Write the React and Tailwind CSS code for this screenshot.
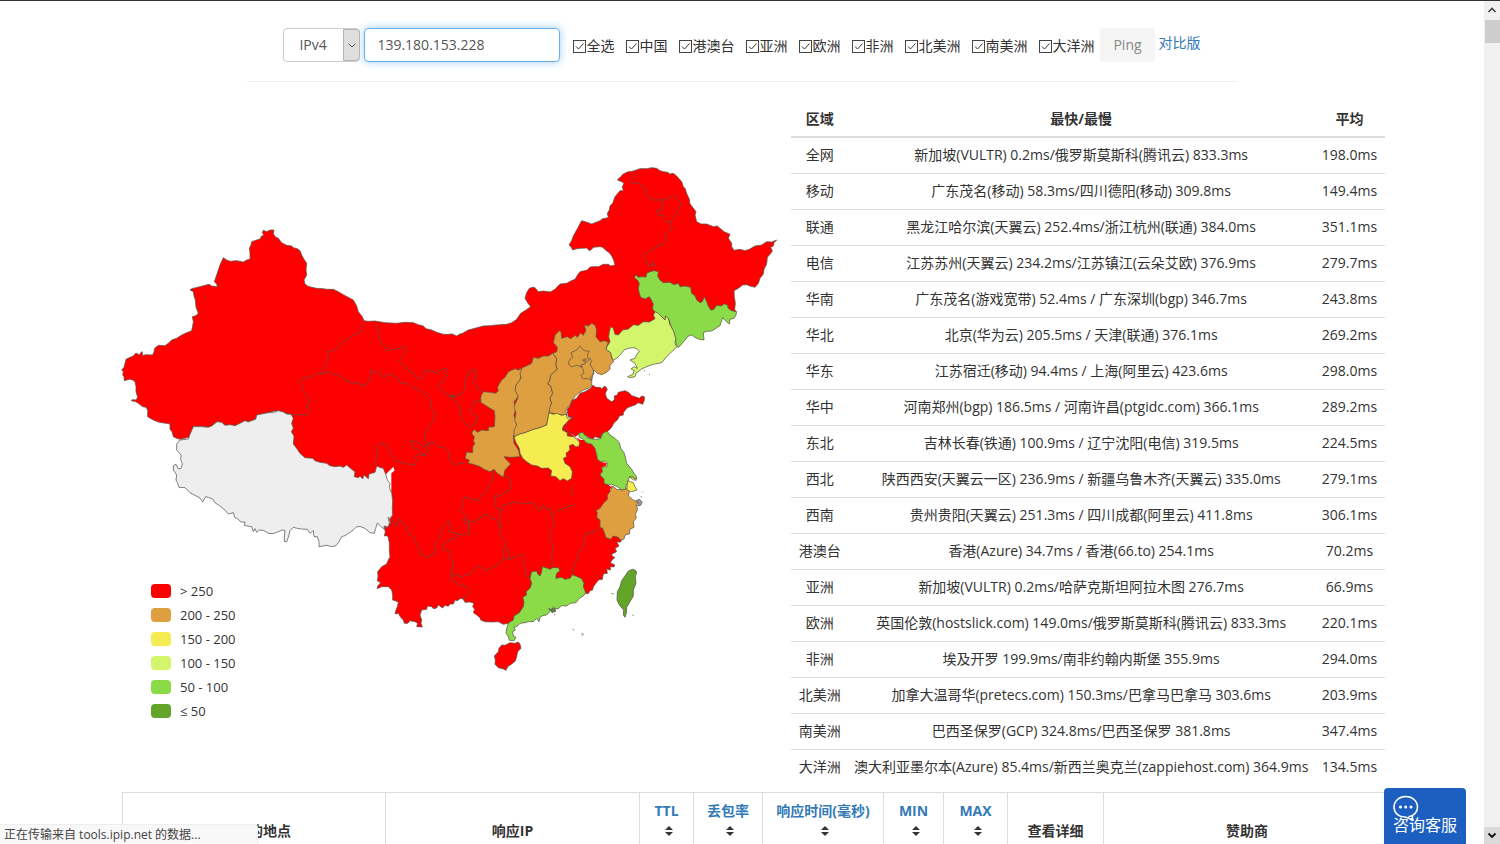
import React, { useState } from "react";

const AREAS = ["全选", "中国", "港澳台", "亚洲", "欧洲", "非洲", "北美洲", "南美洲", "大洋洲"];

const ROWS = [
  ["全网", "新加坡(VULTR) 0.2ms/俄罗斯莫斯科(腾讯云) 833.3ms", "198.0ms"],
  ["移动", "广东茂名(移动) 58.3ms/四川德阳(移动) 309.8ms", "149.4ms"],
  ["联通", "黑龙江哈尔滨(天翼云) 252.4ms/浙江杭州(联通) 384.0ms", "351.1ms"],
  ["电信", "江苏苏州(天翼云) 234.2ms/江苏镇江(云朵艾欧) 376.9ms", "279.7ms"],
  ["华南", "广东茂名(游戏宽带) 52.4ms / 广东深圳(bgp) 346.7ms", "243.8ms"],
  ["华北", "北京(华为云) 205.5ms / 天津(联通) 376.1ms", "269.2ms"],
  ["华东", "江苏宿迁(移动) 94.4ms / 上海(阿里云) 423.6ms", "298.0ms"],
  ["华中", "河南郑州(bgp) 186.5ms / 河南许昌(ptgidc.com) 366.1ms", "289.2ms"],
  ["东北", "吉林长春(铁通) 100.9ms / 辽宁沈阳(电信) 319.5ms", "224.5ms"],
  ["西北", "陕西西安(天翼云一区) 236.9ms / 新疆乌鲁木齐(天翼云) 335.0ms", "279.1ms"],
  ["西南", "贵州贵阳(天翼云) 251.3ms / 四川成都(阿里云) 411.8ms", "306.1ms"],
  ["港澳台", "香港(Azure) 34.7ms / 香港(66.to) 254.1ms", "70.2ms"],
  ["亚洲", "新加坡(VULTR) 0.2ms/哈萨克斯坦阿拉木图 276.7ms", "66.9ms"],
  ["欧洲", "英国伦敦(hostslick.com) 149.0ms/俄罗斯莫斯科(腾讯云) 833.3ms", "220.1ms"],
  ["非洲", "埃及开罗 199.9ms/南非约翰内斯堡 355.9ms", "294.0ms"],
  ["北美洲", "加拿大温哥华(pretecs.com) 150.3ms/巴拿马巴拿马 303.6ms", "203.9ms"],
  ["南美洲", "巴西圣保罗(GCP) 324.8ms/巴西圣保罗 381.8ms", "347.4ms"],
  ["大洋洲", "澳大利亚墨尔本(Azure) 85.4ms/新西兰奥克兰(zappiehost.com) 364.9ms", "134.5ms"],
];

const LEGEND = [
  ["> 250", "bg-[#ff0000]"],
  ["200 - 250", "bg-[#de9f40]"],
  ["150 - 200", "bg-[#f4ec51]"],
  ["100 - 150", "bg-[#d2f56b]"],
  ["50 - 100", "bg-[#8bda48]"],
  ["≤ 50", "bg-[#62a529]"],
];

const RED = "#ff0000";
const ORANGE = "#de9f40";
const YELLOW = "#f4ec51";
const LIME = "#d2f56b";
const GREEN = "#8bda48";
const DARK = "#62a529";

// coast is stroked, inner only closes the fill
function Land({ coast, inner }) {
  return (
    <>
      <path d={`M${coast} ${inner}Z`} fill={RED} stroke="none" />
      <path d={`M${coast}`} fill="none" />
    </>
  );
}

function ChinaMap() {
  return (
    <svg
      viewBox="33 0 2010 1590"
      className="block w-full"
      stroke="#5b5347"
      strokeWidth="2.2"
      strokeLinejoin="round"
      role="img"
      aria-label="中国"
    >
      {/* interior fill */}
      <g transform="translate(540 450)" stroke="none" fill={RED}>
        <path d="M222,65 480,112 600,100 720,120 800,250 830,380 960,560 960,700 885,850 350,850 330,560 310,500 250,560 0,480 -20,350 -10,200 100,100Z" />
      </g>

      {/* Inner Mongolia, Heilongjiang */}
      <g transform="translate(1170 0)">
        <Land
          coast="-408,512 -395,514 -375,513 -345,518 -310,520 -285,517 -260,518 -245,524 -230,528 -222,536 -205,540 -190,547 -170,553 -155,553 -143,552 -130,558 -120,552 -112,550 -95,540 -72,534 -50,528 -30,527 -12,525 20,523 35,518 50,508 62,490 78,480 92,470 84,460 75,445 80,428 88,415 98,412 105,413 115,425 130,423 150,426 165,418 180,402 200,400 212,393 225,388 232,376 240,365 262,360 270,351 280,350 295,350 310,343 325,343 332,348 345,345 341,330 335,318 328,308 320,303 308,292 300,290 280,292 275,298 268,302 260,294 240,295 230,296 218,300 213,290 207,285 215,272 220,258 230,240 238,225 245,212 258,216 275,222 285,218 300,212 308,206 325,203 322,190 328,180 330,168 338,160 345,140 355,128 360,122 370,122 367,110 372,100 365,95 352,90 362,80 370,72 382,66 400,63 420,56 440,56 455,53 470,55 480,62 490,65 503,67 510,72 520,70 530,78 545,95 550,110 555,115 560,130 568,148 570,162 578,172 588,185 585,195 590,215 603,222 620,222 640,230 652,228 660,235 672,245 690,253 685,265 695,280 695,290 702,301 720,298 735,302 748,298 765,288 785,285 800,275 815,276 830,270 822,278 820,288 812,292 817,303 810,313 802,322 800,342 792,358 790,372 780,385 775,400 765,412 750,408 740,404 728,405 715,415 702,422 703,440 706,460 704,478 708,485"
          inner="640,500 470,530 350,570 325,610 160,660 -100,900 -408,800"
        />
        <path
          fill="none"
          d="M405,65 402,82 388,95 400,102 418,98 425,108 436,112 438,130 445,142 460,150 490,150 505,145 520,135 530,145 545,160 538,172 530,190 520,205 512,218 518,235 508,240 495,255 498,268 490,282 470,290 455,300 430,315 436,330 445,345 450,362M487,150 486,180 473,180 470,190 480,197 488,195 492,210 500,218 514,213M452,345 458,335 466,346Z"
        />
      </g>

      {/* Xinjiang */}
      <path
        transform="translate(0 210)"
        fill={RED}
        d="M210,658 200,655 190,650 186,635 180,628 180,612 168,610 155,608 145,606 130,600 113,590 113,570 108,562 98,560 85,550 75,544 65,543 66,539 78,540 83,532 78,515 78,500 75,485 68,480 58,478 50,480 43,482 42,470 38,465 40,455 35,450 42,442 45,430 48,418 60,412 70,408 78,399 88,405 92,398 97,395 98,407 107,404 128,405 132,395 134,385 145,376 165,377 175,370 185,360 200,355 215,345 230,338 245,332 248,318 250,305 247,290 257,287 265,280 258,262 256,240 252,228 250,215 240,210 245,206 270,200 285,196 297,193 305,198 322,200 320,192 313,185 320,165 325,150 330,135 340,113 350,120 360,124 380,122 400,126 410,120 420,117 420,100 418,85 423,75 425,65 440,60 450,57 455,48 462,46 457,38 460,31 470,35 480,30 492,30 490,40 495,50 505,55 515,68 530,76 545,78 550,83 562,86 570,92 575,105 582,118 590,130 588,150 590,165 582,180 584,190 592,198 605,202 620,205 640,206 650,208 670,208 685,215 700,224 730,240 740,258 745,275 757,290 762,302 755,320 755,335 740,342 725,348 705,362 685,380 670,392 652,396 655,410 645,435 635,460 618,462 600,472 580,475 565,485 575,495 578,510 590,525 595,540 602,548 590,555 597,575 590,588 570,583 545,585 525,578 505,572 490,574 475,578 455,582 440,586 437,597 425,602 415,605 405,602 390,610 375,617 360,616 345,616 335,608 322,605 315,608 305,620 295,622 275,619 250,619 245,635 236,652Z"
      />

      {/* Yunnan, Guangxi */}
      <g transform="translate(780 870)">
        <Land
          coast="415,550 400,553 385,545 365,546 345,545 332,540 330,533 320,525 310,518 314,508 308,500 312,490 300,486 285,487 280,478 272,475 262,482 255,480 250,492 240,492 235,499 225,496 218,504 205,495 200,504 190,506 185,500 172,498 170,508 155,510 150,525 155,540 153,550 157,561 140,560 143,550 135,545 120,542 113,550 103,550 100,540 92,532 85,520 75,522 78,510 82,500 85,487 78,483 68,480 68,465 65,450 55,440 48,440 35,440 22,446 23,438 32,428 22,422 24,410 23,395 35,380 50,372 54,362 60,350 58,330 58,310 55,292 50,287 43,288 46,275 42,260 54,262 55,250 62,250 58,238 64,233"
          inner="64,100 300,-100 720,140 700,280 600,420 500,430 490,480 450,540"
        />
        {/* Fujian */}
        <Land
          coast="755,298 752,306 740,306 747,318 735,325 740,335 725,343 728,350 735,352 724,362 722,370 734,374 732,381 720,380 722,390 710,387 712,400 700,402 697,418 685,420 678,430 670,440 668,450 660,452 655,461 645,460"
          inner="600,420 560,300 700,240"
        />
        <path
          fill="none"
          d="M370,95 365,125 355,135 352,152 345,160 335,165 325,182 305,178 285,170 275,185 278,198 270,210 285,225 290,235 300,245 315,245 320,238 340,230 345,224 355,225 365,238 375,235 385,250 390,265M405,108 415,112 425,135 420,150 400,160 390,168 370,168 378,185 375,200 395,212 400,195 425,190 440,185 460,192 480,188 495,192 500,205 510,210 520,195 530,210 540,205 540,218 548,225 562,212 580,205 600,198 612,195 625,200 640,187 655,200 665,198 680,208M595,120 608,130 605,150 612,175 615,192M395,212 388,230 395,262 388,285 400,295 405,315 398,335 400,358 418,358 416,330 405,325M548,225 553,255 540,275 540,292 550,318 545,350 547,382M418,355 440,352 452,342 462,350 457,375 468,385 465,405 482,415M300,245 295,262 298,280 280,285 265,282 258,295 240,300 220,310 217,328 240,334 240,350 252,370 245,395 250,410 262,402 268,412 300,402 310,388 325,376 345,392 370,380 380,376 400,360M64,233 78,260 88,235 98,252 108,258 118,285 130,290 140,312 150,330 150,342 165,352 192,345 198,330 195,312 208,292 215,270 235,242 242,258 238,275 265,282M300,247 280,235 285,252 300,265M245,395 245,420 258,425 265,435 290,440 298,452 290,470 272,475M690,262 680,272 645,282 640,318 625,340 620,360 610,380 605,405"
        />
      </g>

      {/* Gansu, Qinghai, Ningxia */}
      <path
        transform="translate(540 450)"
        fill="none"
        d="M255,68 268,100 265,118 280,135 290,152 312,148 330,145 340,138 347,145 345,162 325,183 345,196 352,210 365,215 378,232 390,237 405,225 400,216 412,212 435,218 452,210 468,205 473,220 460,245 448,250 450,265 462,280 485,290 505,285 522,275 527,240 540,215 555,207 559,225 550,245 562,262 578,275M485,290 495,305 508,315 512,340 512,355 530,375 545,382M480,286 492,286 490,294ZM545,382 558,368 562,350 545,342 545,325 550,305 572,302M95,220 120,216 130,224 145,226 165,240 180,246 210,252 225,257 240,240 242,212 265,220 280,232 300,220 320,232 332,250 350,248 365,262 385,268 410,285 424,305 424,325 437,345 425,370 415,380 405,402 408,425 418,430 400,440 380,425 362,423 372,445 385,448 405,468 385,462 375,470 380,480 375,494 350,492 325,484 315,480 300,460 290,435 270,428 258,440 265,465 256,480 258,498M405,468 415,435 430,425 445,440 462,442 475,455 480,480 495,494 525,487"
      />

      {/* Tibet */}
      <path
        transform="translate(0 750)"
        fill="#eeeeee"
        d="M210,120 235,117 240,103 250,80 275,80 295,82 305,78 322,65 335,67 345,76 360,74 375,77 390,70 405,62 415,66 425,62 437,58 440,45 455,42 475,38 490,38 505,32 520,36 530,42 543,43 550,55 545,70 550,85 544,95 552,108 550,132 560,145 570,160 585,173 608,175 615,182 630,187 650,190 660,197 675,200 690,198 700,202 710,195 725,208 735,215 733,230 745,233 750,228 758,237 762,225 775,236 777,222 795,217 800,198 812,203 820,205 828,225 832,240 840,250 838,262 845,280 848,300 847,325 848,345 840,355 834,352 838,370 835,380 822,378 823,388 812,378 802,369 797,385 793,400 780,398 765,385 752,380 740,380 732,388 720,397 705,407 695,410 687,425 678,437 665,440 650,436 627,440 627,425 622,410 612,410 610,392 600,400 592,388 575,387 562,385 550,382 540,392 535,412 530,425 523,424 523,408 525,392 517,390 505,395 490,401 475,400 460,391 448,390 440,397 435,386 430,395 425,380 412,378 403,376 405,366 392,366 385,358 374,352 370,338 355,342 345,330 330,318 315,308 308,297 295,292 287,290 278,306 270,294 255,286 240,278 225,263 207,262 202,248 198,240 200,225 190,210 190,197 198,193 205,207 213,205 217,192 212,178 213,165 200,150 200,132Z"
      />

      {/* Jilin, Liaoning */}
      <g transform="translate(1170 0)">
        <path
          fill={GREEN}
          d="M403,383 408,374 415,382 425,380 438,381 440,370 450,365 462,362 475,365 473,378 480,390 490,398 510,397 522,404 535,400 540,410 555,408 572,412 575,430 585,437 590,450 600,458 607,455 613,440 620,455 625,468 632,480 642,478 650,466 665,468 672,461 682,465 685,475 695,482 710,485 708,495 702,505 690,508 688,522 678,514 668,503 664,515 660,527 648,535 635,543 620,544 610,548 612,570 598,568 585,562 575,555 565,558 555,570 545,582 535,593 528,582 527,565 520,545 512,525 505,505 497,498 495,510 480,495 465,487 457,475 460,462 455,452 448,440 435,447 422,442 418,430 415,415 418,400 412,390Z"
        />
        <path
          fill={LIME}
          d="M465,485 475,490 485,500 495,510 497,498 505,505 510,525 520,542 527,565 525,580 530,592 515,605 500,620 485,638 460,643 440,650 425,657 408,670 405,680 390,683 383,680 398,673 403,662 393,657 402,650 412,655 405,640 390,630 405,625 412,610 418,605 410,596 400,593 385,595 372,600 362,613 350,625 340,631 335,620 328,605 316,600 322,588 330,575 326,560 328,545 332,530 340,535 345,553 355,555 368,540 385,537 400,524 415,526 430,515 448,516 465,506 460,495Z"
        />
        <path fill="none" d="M432,662h3M447,672l3,2" />
      </g>

      {/* Shaanxi */}
      <path
        transform="translate(540 450)"
        fill={ORANGE}
        d="M697,203 685,210 675,206 655,215 645,232 635,240 622,262 625,272 618,280 600,277 580,275 574,285 572,295 573,308 580,312 600,325 613,332 615,350 613,380 595,382 595,392 575,390 562,397 552,388 545,400 553,410 550,425 555,430 548,440 548,458 530,456 525,475 538,480 535,490 550,493 570,500 582,508 600,515 612,508 620,518 640,532 645,510 662,492 650,480 642,470 662,472 690,470 685,450 672,430 670,408 678,395 680,370 672,345 678,325 672,305 685,290 676,262 690,240Z"
      />

      <g transform="translate(1110 480)">
        {/* Shanxi, Hebei */}
        <path
          fill={ORANGE}
          d="M127,173 120,190 123,205 108,225 105,240 115,260 102,290 108,310 104,330 110,345 102,360 102,381 120,372 135,368 155,360 180,353 200,345 204,325 207,308 215,280 210,265 218,250 212,228 203,222 210,210 212,195 232,178 228,165 230,145 218,130 205,138 190,138 175,145 160,142 155,160 145,165Z"
        />
        <path
          fill={ORANGE}
          d="M218,130 230,125 232,112 220,98 225,75 237,62 243,65 245,85 262,80 272,86 285,76 292,82 302,68 310,76 318,60 312,45 325,48 335,40 345,45 350,60 348,80 360,95 373,92 385,96 378,118 392,128 395,145 401,155 390,165 390,178 378,188 365,194 352,190 342,180 335,212 335,226 325,235 310,240 295,250 282,262 275,278 265,290 258,300 260,315 245,315 230,312 207,308 210,290 215,280 210,265 218,250 212,228 203,222 210,210 212,195 232,178 228,165 230,145Z"
        />
        <path
          fill="none"
          d="M300,108 312,122 328,124 322,135 325,145 308,150 318,160 303,165 305,172 292,166 275,170 265,163 268,150 278,142 273,128 290,120ZM308,150 322,155 330,145 335,155 330,162 340,180 342,192 332,200 335,212 322,205 310,207 302,196 312,190 308,175 303,165"
        />
        {/* Anhui */}
        <path
          fill={RED}
          d="M288,382 302,390 318,390 325,402 335,402 345,415 350,435 362,455 380,460 378,468 365,472 368,485 360,492 370,505 372,520 385,530 398,528 385,545 378,560 375,575 365,600 360,615 300,610 283,590 280,560 283,540 262,512 275,500 272,472 258,462 250,445 265,425 268,405 290,408 298,395Z"
          stroke="none"
        />
        {/* Henan */}
        <path
          fill={YELLOW}
          d="M207,308 220,313 230,310 245,316 258,313 262,325 278,322 262,335 250,348 247,360 262,368 262,378 280,380 290,388 299,398 296,410 285,410 280,403 268,407 270,420 258,430 260,440 250,445 255,460 270,470 277,485 275,505 262,513 250,506 240,512 228,500 212,498 215,482 205,474 185,475 172,468 155,465 140,455 128,445 120,430 118,415 108,398 102,381 120,372 135,368 155,360 180,353 200,345 204,325Z"
        />
        {/* Shandong */}
        <path
          fill={RED}
          d="M262,298 270,288 275,272 290,265 300,250 315,245 330,236 338,226 348,232 360,232 365,236 375,228 382,238 376,250 380,265 395,275 403,270 403,258 412,255 415,247 435,242 447,248 455,257 465,260 478,265 485,258 493,260 493,270 488,283 475,278 465,285 450,290 440,295 430,308 430,315 418,318 412,330 402,338 395,352 385,362 380,368 365,372 362,385 345,380 338,388 325,382 310,372 300,370 285,380 275,370 265,368 262,360 247,355 258,345 262,335 278,322 264,320Z"
        />
        {/* Jiangsu */}
        <path
          fill={GREEN}
          d="M296,370 308,367 318,380 325,385 345,388 362,386 370,368 382,364 390,375 405,385 418,398 422,415 432,428 437,445 440,460 455,478 462,490 470,500 470,507 455,500 445,505 445,518 438,525 437,540 425,540 412,530 395,523 385,525 372,520 372,508 360,495 368,485 365,472 380,470 383,460 372,453 362,455 352,448 350,432 345,415 335,402 318,398 310,388 298,382Z"
        />
        <path fill={YELLOW} d="M443,512 460,518 465,530 471,540 455,545 440,542ZM448,500 458,502 470,510 460,510Z" />
      </g>

      <g transform="translate(780 870)">
        {/* Zhejiang */}
        <path
          fill={ORANGE}
          d="M728,138 740,148 758,150 770,146 778,155 775,168 790,180 805,188 798,195 803,208 795,225 800,232 790,245 792,262 780,268 778,282 765,285 762,297 752,301 745,292 730,288 722,298 707,292 704,280 698,265 690,262 690,240 680,232 682,218 678,212 690,205 700,190 712,178 712,165 720,155Z"
        />
        <path fill="#999999" d="M798,182 808,178 817,186 812,196 802,198 806,190ZM813,168l2,4M817,155l2,3" />
        {/* Guangdong */}
        <path
          fill={GREEN}
          d="M485,395 500,393 503,402 510,408 515,395 517,380 530,384 540,388 548,383 565,383 570,392 560,400 557,415 575,412 585,418 600,415 607,404 622,410 635,416 642,430 640,440 647,458 640,468 628,475 618,488 600,490 590,498 575,497 565,506 557,506 550,500 545,515 537,504 540,515 530,525 518,527 510,532 507,545 500,535 490,545 475,545 465,548 450,550 442,558 432,562 436,570 428,575 430,588 438,592 432,602 418,601 415,590 408,580 410,565 416,548 430,540 432,528 448,518 460,500 462,485 458,472 470,465 468,455 480,445 485,430 480,415Z"
        />
        <path fill="#558844" d="M541,508 555,505 557,514 546,518ZM552,524l4,1" />
        {/* Hainan */}
        <path
          fill={RED}
          d="M395,615 405,616 420,608 435,610 445,606 450,613 453,625 443,635 440,650 436,663 425,672 413,680 408,691 398,686 385,683 375,673 376,660 373,648 385,635 387,625Z"
        />
        {/* Taiwan */}
        <path
          fill={DARK}
          d="M787,388 795,390 800,396 796,412 798,430 790,450 790,468 780,485 770,502 769,520 765,532 760,525 761,510 748,495 741,480 742,455 750,440 755,422 767,405 775,393Z"
        />
        <path fill="none" d="M724,460 731,462M787,525l4,2M608,567l5,4M634,580 640,583 635,587" />
      </g>
    </svg>
  );
}

function AreaCheck({ label }) {
  const [on, setOn] = useState(true);
  return (
    <label className="flex items-center">
      <span className="relative flex">
        <input
          type="checkbox"
          checked={on}
          onChange={() => setOn(!on)}
          className="h-[13px] w-[13px] appearance-none border border-[#444] bg-white"
        />
        {on && (
          <svg viewBox="0 0 13 13" className="pointer-events-none absolute inset-0" fill="none" stroke="#333">
            <path d="M3 6.5 5.5 9 10.5 3.5" />
          </svg>
        )}
      </span>
      {label}
    </label>
  );
}

function SortIcon() {
  return (
    <svg viewBox="0 0 8 10" className="ml-1 inline-block h-[10px] w-2" fill="#333">
      <path d="M4 0 8 4H0ZM4 10 0 6H8Z" />
    </svg>
  );
}

function SortHead({ children }) {
  return (
    <th className="border border-[#ddd] px-2 pt-2 pb-3 align-bottom">
      <a href="#sort" className="block text-[#337ab7]">
        {children}
      </a>
      <span className="flex h-5 items-center justify-center">
        <SortIcon />
      </span>
    </th>
  );
}

function PlainHead({ children, className = "" }) {
  return <th className={`border border-[#ddd] px-2 pt-2 pb-3 align-bottom ${className}`}>{children}</th>;
}

export default function App() {
  const [ip, setIp] = useState("139.180.153.228");

  return (
    <div className="flex h-screen overflow-hidden border-t border-[#333] bg-white font-['Open_Sans','Noto_Sans_CJK_SC',sans-serif] text-sm leading-5 text-[#333]">
      <div className="min-w-0 flex-1 overflow-hidden">
        {/* Query form */}
        <form
          onSubmit={(e) => e.preventDefault()}
          className="mx-auto flex max-w-[990px] items-center justify-center border-b border-[#eee] pt-[27px] pb-[19px] whitespace-nowrap"
        >
          <div className="relative mr-1 flex">
            <select
              aria-label="IP"
              className="h-[34px] w-[77px] appearance-none rounded border border-[#ccc] bg-white pl-[15px] text-sm text-[#555]"
            >
              <option>IPv4</option>
              <option>IPv6</option>
            </select>
            <span className="pointer-events-none absolute inset-y-px right-0 flex w-[17px] items-center justify-center rounded-r-sm border border-[#b5b5b5] bg-[#dedede]">
              <svg viewBox="0 0 8 5" className="w-2" fill="none" stroke="#555">
                <path d="M.5.5 4 4 7.5.5" />
              </svg>
            </span>
          </div>
          <input
            type="text"
            aria-label="IP地址"
            value={ip}
            onChange={(e) => setIp(e.target.value)}
            className="h-[34px] w-[196px] rounded border border-[#66afe9] px-3 pb-0.5 text-sm text-[#555] shadow-[0_0_8px_rgba(102,175,233,0.6)] outline-none"
          />
          <div className="mt-0.5 ml-[13px] flex gap-3">
            {AREAS.map((a) => (
              <AreaCheck key={a} label={a} />
            ))}
          </div>
          <button className="ml-1.5 h-[34px] rounded bg-[#f5f5f5] px-[13px] text-[#888]">Ping</button>
          <a href="#compare" className="mb-1 ml-1 text-[#337ab7]">
            对比版
          </a>
        </form>

        <div className="flex pt-[19px] pr-[99px] pl-[121px]">
          {/* Map */}
          <div className="relative min-w-0 flex-1 pt-[49px]">
            <ChinaMap />
            <ul className="absolute bottom-16 left-[30px] flex flex-col gap-1 text-[13px]">
              {LEGEND.map(([text, color]) => (
                <li key={text} className="flex items-center gap-[9px]">
                  <span className={`h-[14px] w-5 rounded ${color}`} />
                  {text}
                </li>
              ))}
            </ul>
          </div>

          {/* Summary */}
          <table className="w-[594px] shrink-0 self-start text-center whitespace-nowrap">
            <thead>
              <tr className="h-9 border-b-2 border-[#ddd]">
                <th className="px-2">区域</th>
                <th className="px-2">最快/最慢</th>
                <th className="px-2">平均</th>
              </tr>
            </thead>
            <tbody>
              {ROWS.map((r) => (
                <tr key={r[0]} className="h-9 border-b border-[#ddd] last:border-0">
                  <td className="px-[7px]">{r[0]}</td>
                  <td>{r[1]}</td>
                  <td className="px-[7px]">{r[2]}</td>
                </tr>
              ))}
            </tbody>
          </table>
        </div>

        {/* Result list */}
        <div className="pt-[7px] pr-[93px] pl-[122px]">
          <table className="w-full table-fixed text-center whitespace-nowrap">
            <colgroup>
              <col className="w-[263px]" />
              <col className="w-[254px]" />
              <col className="w-[54px]" />
              <col className="w-[69px]" />
              <col className="w-[121px]" />
              <col className="w-[60px]" />
              <col className="w-[64px]" />
              <col className="w-[96px]" />
              <col />
            </colgroup>
            <thead>
              <tr>
                <PlainHead className="pl-10">的地点</PlainHead>
                <PlainHead>响应IP</PlainHead>
                <SortHead>TTL</SortHead>
                <SortHead>丢包率</SortHead>
                <SortHead>响应时间(毫秒)</SortHead>
                <SortHead>MIN</SortHead>
                <SortHead>MAX</SortHead>
                <PlainHead>查看详细</PlainHead>
                <PlainHead>赞助商</PlainHead>
              </tr>
            </thead>
          </table>
        </div>
      </div>

      {/* Scrollbar */}
      <div className="flex w-4 flex-col items-center bg-[#f0f0f0]">
        <svg viewBox="0 0 16 19" className="h-[19px] w-4" fill="none" stroke="#444" strokeWidth="1.6">
          <path d="M4.500 11 8 7.500 11.500 11" />
        </svg>
        <div className="h-[23px] w-[15px] bg-[#cdcdcd]" />
        <svg viewBox="0 0 16 17" className="mt-auto h-[17px] w-4 bg-[#dadada]" fill="none" stroke="#111" strokeWidth="1.8">
          <path d="M4.500 6.500 8 10 11.500 6.500" />
        </svg>
      </div>

      {/* Browser status */}
      <div className="fixed bottom-0 left-0 h-5 w-[258px] rounded-tr-sm border-t border-r border-[#eee] bg-[#f8f8f8] pl-1 text-xs leading-5 text-[#444]">
        正在传输来自 tools.ipip.net 的数据...
      </div>

      {/* Support chat */}
      <button className="fixed right-[34px] bottom-0 flex h-14 w-[82px] flex-col rounded-t bg-[#1c5fc0] px-2 pt-[7px] text-base leading-5 text-white">
        <svg viewBox="0 0 26 26" className="ml-px h-[26px] w-[26px] shrink-0" fill="none" stroke="#fff" strokeWidth="1.6">
          <path d="M15.500 21.800C21 21 24.500 17 24.500 12.200 24.500 6 19.300 1.500 12.800 1.500S1 6 1 12.200C1 18 6 22 12 22 15 22.500 17.500 24 19.500 25.500L19.300 20" strokeLinejoin="round" />
          <g fill="#fff" stroke="none">
            <circle cx="7.500" cy="12" r="1.500" />
            <circle cx="12.700" cy="12" r="1.500" />
            <circle cx="18" cy="12" r="1.500" />
          </g>
        </svg>
        <span className="-mt-1.5">咨询客服</span>
      </button>
    </div>
  );
}
